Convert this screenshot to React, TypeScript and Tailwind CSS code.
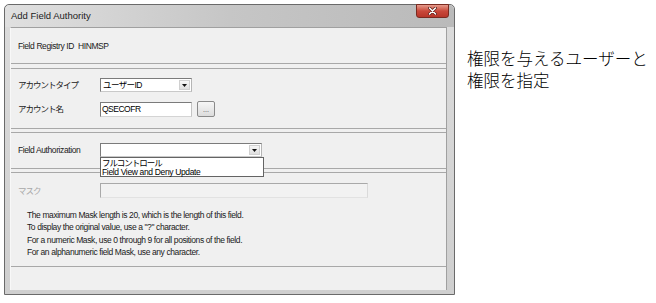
import React from "react";

const ui = "font-['Liberation_Sans','Noto_Sans_CJK_JP',sans-serif]";
const jp = "font-['Noto_Sans_CJK_JP',sans-serif]";

const DropArrow = () => (
  <span className="flex w-[11px] items-center justify-center border border-[#d0d0d0] bg-gradient-to-b from-[#f7f7f7] to-[#dedede]">
    <svg width="5" height="3" viewBox="0 0 5 3">
      <path d="M0 0h5L2.5 3z" fill="#111" />
    </svg>
  </span>
);

const Combo = ({ value, width }: { value: string; width: string }) => (
  <div className={`flex h-[14px] ${width} border border-[#7b7b7b] border-r-[#b5b5b5] border-b-[#c9c9c9] bg-white p-px`}>
    <span className={`flex-1 pl-px text-[8.5px] leading-[10px] tracking-[-0.6px] text-black ${ui}`}>{value}</span>
    <DropArrow />
  </div>
);

const Label = ({ children, muted }: { children: React.ReactNode; muted?: boolean }) => (
  <span className={`w-[82px] shrink-0 text-[8.5px] leading-[12px] tracking-[-1px] ${muted ? "text-[#a8a8a8]" : "text-[#1a1a1a]"} ${ui}`}>
    {children}
  </span>
);

export default function App() {
  return (
    <div className="flex h-[303px] w-[656px] items-start overflow-hidden bg-white">
      {/* Dialog window */}
      <div className="ml-[4px] mt-[4px] flex h-[291px] w-[451px] shrink-0 flex-col rounded-t-[5px] border border-[#6a6a6a] bg-gradient-to-b from-[#dcdcdc] to-[#cfcfcf]">
        {/* Title bar */}
        <div className="flex h-[22px] shrink-0 items-start justify-between rounded-t-[5px] bg-gradient-to-r from-[#e0e0e0] via-[#c6c6c6] to-[#bababa] pl-[6px] pr-[5px]">
          <span className="mt-[5px] text-[9.5px] leading-[12px] text-[#222] font-['Liberation_Sans',sans-serif]">
            Add Field Authority
          </span>
          <div className="-mt-px flex h-[14px] w-[33px] items-center justify-center rounded-b-[3px] border border-[#7a2a20] bg-gradient-to-b from-[#e49a8c] via-[#c9483a] to-[#b8362a]">
            <svg width="9" height="8" viewBox="0 0 9 8">
              <path d="M1.5 1l6 6M7.5 1l-6 6" stroke="#5a1a14" strokeWidth="3" strokeLinecap="round" />
              <path d="M1.5 1l6 6M7.5 1l-6 6" stroke="#fff" strokeWidth="1.6" strokeLinecap="round" />
            </svg>
          </div>
        </div>

        {/* Body */}
        <div className="flex flex-1 pl-[5px] pr-[7px] pb-[4px]">
          <div className="flex flex-1 flex-col border border-[#a0a0a0] border-l-[#f8f8f8] border-b-0 bg-[#f0f0f0]">
            {/* Registry */}
            <div className="flex h-[36px] shrink-0 items-center border-b border-[#a8a8a8] pl-[7px]">
              <span className={`text-[8.5px] leading-[12px] tracking-[-0.4px] text-[#1a1a1a] ${ui}`}>
                Field Registry ID&nbsp; HINMSP
              </span>
            </div>

            {/* Account */}
            <div className="mt-[4px] flex h-[61px] shrink-0 flex-col gap-[9px] border-y border-[#a8a8a8] pl-[7px] pt-[9px]">
              <div className="flex items-center">
                <Label>アカウントタイプ</Label>
                <Combo value="ユーザーID" width="w-[92px]" />
              </div>
              <div className="flex items-center">
                <Label>アカウント名</Label>
                <div className="flex h-[15px] w-[92px] items-center border border-[#7b7b7b] border-r-[#c4c4c4] border-b-[#d4d4d4] bg-white pl-px">
                  <span className={`text-[8.5px] leading-[10px] tracking-[-0.5px] text-black ${ui}`}>QSECOFR</span>
                </div>
                <div className="ml-[5px] flex h-[16px] w-[18px] items-end justify-center rounded-[2px] border border-[#8a8a8a] bg-gradient-to-b from-[#f6f6f6] to-[#dcdcdc] pb-[3px]">
                  <span className={`text-[7px] leading-[6px] text-[#444] ${ui}`}>...</span>
                </div>
              </div>
            </div>

            {/* Authorization */}
            <div className="relative mt-[3px] flex h-[37px] shrink-0 flex-col border-y border-[#a8a8a8] pl-[7px] pt-[10px]">
              <div className="flex items-center">
                <Label>
                  <span className="tracking-[-0.4px]">Field Authorization</span>
                </Label>
                <Combo value="" width="w-[162px]" />
              </div>
              <div className="absolute left-[89px] top-[24px] z-10 flex h-[20px] w-[164px] flex-col border border-[#646464] bg-white pl-px pt-px">
                <span className={`text-[8.5px] leading-[9px] tracking-[-1px] text-black ${ui}`}>フルコントロール</span>
                <span className={`text-[8.5px] leading-[9px] tracking-[-0.35px] text-black ${ui}`}>Field View and Deny Update</span>
              </div>
            </div>

            {/* Mask */}
            <div className="mt-[3px] flex h-[95px] shrink-0 flex-col border-y border-[#a8a8a8] pl-[7px] pt-[10px]">
              <div className="flex items-center">
                <Label muted>マスク</Label>
                <div className="h-[15px] w-[268px] border border-[#a9a9a9] border-r-[#dadada] border-b-[#e2e2e2] bg-[#f2f2f2]" />
              </div>
              <div className={`ml-[9px] mt-[11px] flex flex-col text-[8.5px] leading-[12.4px] tracking-[-0.4px] text-[#1a1a1a] ${ui}`}>
                <span>The maximum Mask length is 20, which is the length of this field.</span>
                <span>To display the original value, use a "?" character.</span>
                <span>For a numeric Mask, use 0 through 9 for all positions of the field.</span>
                <span>For an alphanumeric field Mask, use any character.</span>
              </div>
            </div>

            {/* Footer */}
            <div className="flex-1" />
          </div>
        </div>
      </div>

      {/* Note */}
      <div className={`ml-[12px] mt-[47px] whitespace-nowrap text-[16.5px] font-light leading-[22px] text-black ${jp}`}>
        権限を与えるユーザーと
        <br />
        権限を指定
      </div>
    </div>
  );
}
